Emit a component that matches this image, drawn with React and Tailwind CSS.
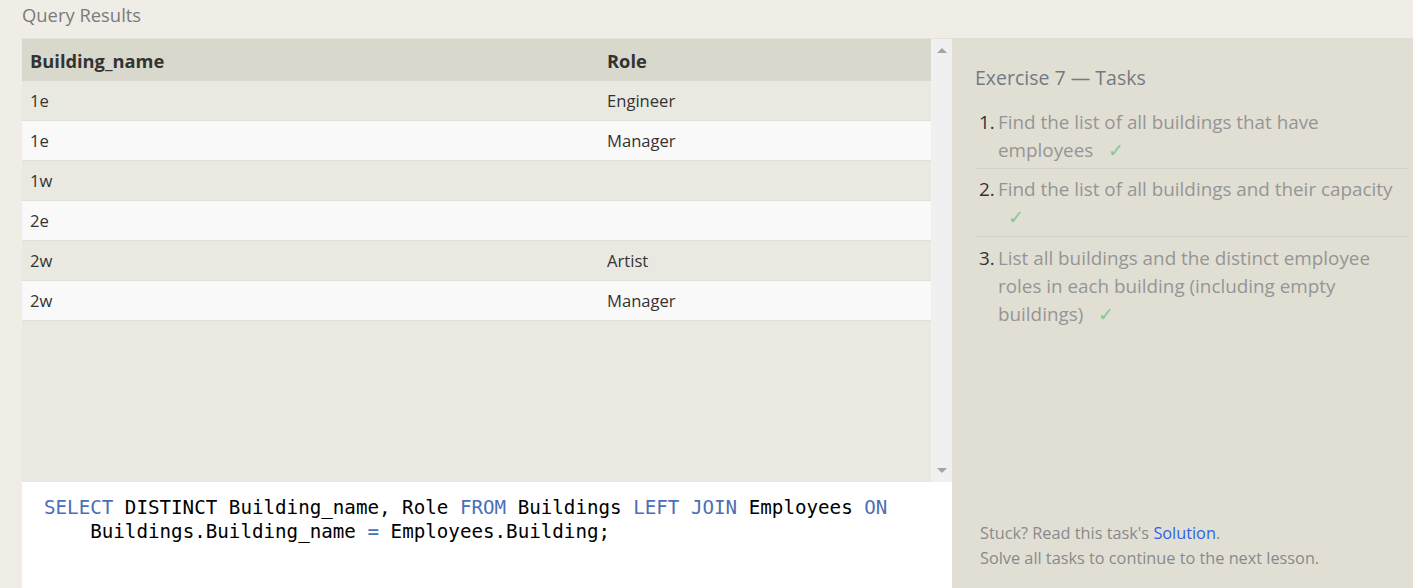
import React from "react";

const rows = [
  ["1e", "Engineer"],
  ["1e", "Manager"],
  ["1w", ""],
  ["2e", ""],
  ["2w", "Artist"],
  ["2w", "Manager"],
];

const K = ({ children }) => <span className="text-[#4b6fb4]">{children}</span>;

function Check() {
  return (
    <>
      {" "}
      <span className="ml-[10px] text-[#7fcb8d]">✓</span>
    </>
  );
}

export default function App() {
  return (
    <div
      className="flex h-[588px] w-[1413px] flex-col overflow-hidden bg-[#f0ede6]"
      style={{ fontFamily: '"Open Sans", "Noto Sans", sans-serif' }}
    >
      <div className="h-[38px] pl-[22px] pt-[3px] text-[18.4px] leading-[24px] text-[#7b7b7b]">
        Query Results
      </div>
      <div className="flex flex-1">
        <div className="ml-[22px] flex w-[930px] flex-col border-t border-[#e4e2da]">
          <div className="flex h-[443px]">
            <div className="flex flex-1 flex-col bg-[#eae9e1]">
              <div className="grid h-[42px] grid-cols-[577px_1fr] items-center bg-[#d9d8cc] pt-[2px] text-[18.3px] font-bold text-[#333]">
                <div className="pl-[8px]">Building_name</div>
                <div className="pl-[8px]">Role</div>
              </div>
              {rows.map((r, i) => (
                <div
                  key={i}
                  className={
                    "grid h-[40px] grid-cols-[577px_1fr] items-center border-b border-[#e0dfd8] pt-[2px] text-[16.6px] text-[#333] " +
                    (i % 2 === 0 ? "bg-[#eae9e1]" : "bg-[#f9f9f9]")
                  }
                >
                  <div className="pl-[8px]">{r[0]}</div>
                  <div className="pl-[8px]">{r[1]}</div>
                </div>
              ))}
            </div>
            <div className="flex w-[21px] flex-col items-center justify-between bg-[#f0f0f0] py-[9px]">
              <div className="h-0 w-0 border-x-[5px] border-b-[5px] border-x-transparent border-b-[#a3a3a3]" />
              <div className="h-0 w-0 border-x-[5px] border-t-[5px] border-x-transparent border-t-[#a3a3a3]" />
            </div>
          </div>
          <div
            className="flex-1 bg-white pl-[22px] pt-[14px] text-[19.2px] leading-[24px] text-black"
            style={{ fontFamily: '"DejaVu Sans Mono", "Liberation Mono", monospace' }}
          >
            <div className="whitespace-pre">
              <K>SELECT</K> DISTINCT Building_name, Role <K>FROM</K> Buildings <K>LEFT</K> <K>JOIN</K> Employees <K>ON</K>
            </div>
            <div className="whitespace-pre">
              {"    "}Buildings.Building_name <K>=</K> Employees.Building;
            </div>
          </div>
        </div>
        <div className="flex flex-1 flex-col justify-between bg-[#e1dfd4] pb-[17px] pl-[23px] pr-[5px] pt-[26px]">
          <div>
            <div className="text-[19.5px] leading-[28px] text-[#747a83]">Exercise 7 — Tasks</div>
            <ol className="mt-[16px] text-[18.85px] leading-[28px] text-[#959595]">
              <li className="flex border-b border-[#d4d2c7] pb-[4px]">
                <span className="w-[23px] shrink-0 pl-[4px] text-[#333]">1.</span>
                <span>
                  Find the list of all buildings that have employees
                  <Check />
                </span>
              </li>
              <li className="mt-[6px] flex border-b border-[#d4d2c7] pb-[5px]">
                <span className="w-[23px] shrink-0 pl-[4px] text-[#333]">2.</span>
                <span>
                  Find the list of all buildings and their capacity
                  <Check />
                </span>
              </li>
              <li className="mt-[7px] flex">
                <span className="w-[23px] shrink-0 pl-[4px] text-[#333]">3.</span>
                <span>
                  List all buildings and the distinct employee roles in each building (including empty buildings)
                  <Check />
                </span>
              </li>
            </ol>
          </div>
          <div className="pl-[5px] text-[16.3px] leading-[25px] text-[#8a8a8a]">
            <div>
              Stuck? Read this task's <span className="text-[#2f62e8]">Solution</span>.
            </div>
            <div>Solve all tasks to continue to the next lesson.</div>
          </div>
        </div>
      </div>
    </div>
  );
}
